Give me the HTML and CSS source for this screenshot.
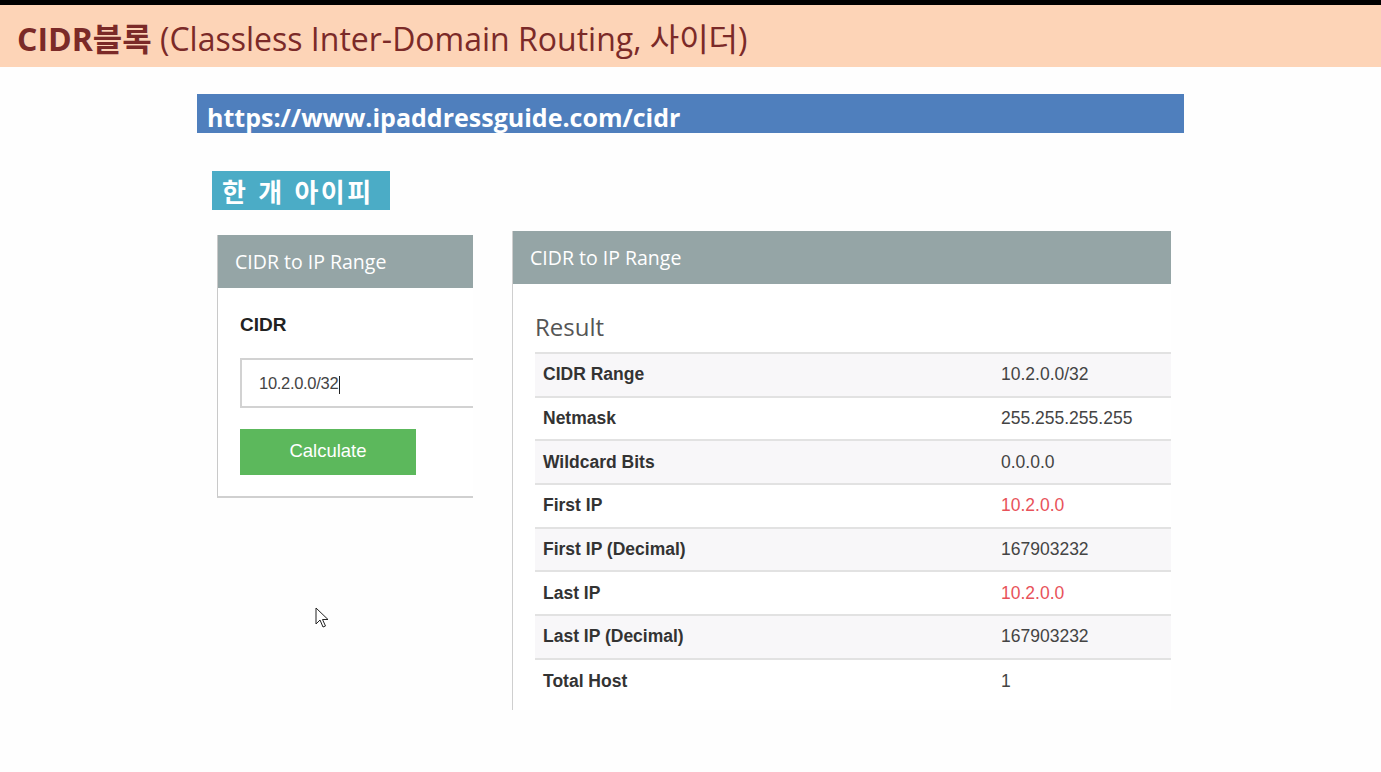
FILE: index.html
```html
<!DOCTYPE html>
<html lang="ko">
<head>
<meta charset="utf-8">
<link rel="stylesheet" href="styles.css">
</head>
<body>
<div class="topline"></div>
<header class="title-bar">
  <h1><b>CIDR블록</b> (Classless Inter-Domain Routing, 사이더)</h1>
</header>
<main class="content">
  <div class="url-bar">https://www.ipaddressguide.com/cidr</div>
  <div class="tag">한 개 아이피</div>
  <div class="panels">
    <section class="panel form-panel">
      <div class="panel-head">CIDR to IP Range</div>
      <div class="panel-body">
        <div class="field-label">CIDR</div>
        <div class="input">10.2.0.0/32<span class="caret"></span></div>
        <div class="btn">Calculate</div>
      </div>
    </section>
    <section class="panel result-panel">
      <div class="panel-head">CIDR to IP Range</div>
      <div class="result-body">
        <h2>Result</h2>
        <table class="result">
          <tr class="odd"><th>CIDR Range</th><td>10.2.0.0/32</td></tr>
          <tr><th>Netmask</th><td>255.255.255.255</td></tr>
          <tr class="odd"><th>Wildcard Bits</th><td>0.0.0.0</td></tr>
          <tr><th>First IP</th><td class="red">10.2.0.0</td></tr>
          <tr class="odd"><th>First IP (Decimal)</th><td>167903232</td></tr>
          <tr><th>Last IP</th><td class="red">10.2.0.0</td></tr>
          <tr class="odd"><th>Last IP (Decimal)</th><td>167903232</td></tr>
          <tr><th>Total Host</th><td>1</td></tr>
        </table>
      </div>
    </section>
  </div>
</main>
<svg class="cursor" width="14" height="22" viewBox="0 0 14 22">
  <path d="M1 1 L1 17 L5 13 L8 20 L10.5 19 L7.5 12.5 L13 12.5 Z" fill="#fff" stroke="#222" stroke-width="1"/>
</svg>
</body>
</html>
```
FILE: styles.css
```css
* { box-sizing: border-box; }
html, body { margin: 0; padding: 0; }
body {
  width: 1381px;
  height: 772px;
  overflow: hidden;
  background: #fefefe;
  font-family: "Liberation Sans", Arial, sans-serif;
  position: relative;
}
.topline { height: 5px; background: #000; }
.title-bar {
  height: 62px;
  background: #fdd4b7;
  padding-left: 17px;
  padding-top: 5px;
  display: flex;
  align-items: center;
}
.title-bar h1 {
  margin: 0;
  font-family: "Open Sans", "Noto Sans CJK KR", sans-serif;
  font-weight: 400;
  font-size: 32px;
  letter-spacing: 0;
  color: #7b2a28;
  line-height: 1;
  white-space: nowrap;
}
.title-bar h1 b { font-weight: 700; }
.content {
  padding-left: 197px;
  padding-top: 27px;
}
.url-bar {
  width: 987px;
  height: 39px;
  background: #4f7fbd;
  color: #fff;
  font-family: "Open Sans", "Noto Sans CJK KR", sans-serif;
  font-weight: 700;
  font-size: 25px;
  line-height: 39px;
  padding-left: 10px;
  padding-top: 4px;
}
.tag {
  margin-top: 38px;
  margin-left: 15px;
  width: 178px;
  height: 39px;
  background: #4bacc6;
  color: #fff;
  font-family: "Noto Sans CJK KR", sans-serif;
  font-weight: 700;
  font-size: 26px;
  line-height: 39px;
  padding-left: 10px;
  letter-spacing: 2.5px;
  white-space: nowrap;
}
.panels {
  display: flex;
  align-items: flex-start;
  margin-top: 21px;
  margin-left: 20px;
  gap: 39px;
}
.panel { background: #fff; }
.panel-head {
  background: #95a5a6;
  color: #fff;
  font-family: "Open Sans", sans-serif;
  font-size: 19.5px;
  height: 53px;
  line-height: 53px;
  padding-left: 17px;
  white-space: nowrap;
}
.form-panel {
  width: 256px;
  margin-top: 4px;
  border-left: 1px solid #c9c9c9;
  border-bottom: 2px solid #d0d0d0;
}
.panel-body { padding: 26px 0 21px 22px; }
.field-label {
  font-weight: 700;
  font-size: 19px;
  color: #222;
  height: 21px;
  line-height: 21px;
}
.input {
  margin-top: 23px;
  height: 50px;
  border: 2px solid #d2d2d2;
  border-right: none;
  padding-left: 17px;
  font-size: 16.5px;
  line-height: 46px;
  color: #444;
  letter-spacing: -0.3px;
}
.caret {
  display: inline-block;
  width: 1px;
  height: 18px;
  background: #222;
  vertical-align: middle;
  margin-left: 1px;
}
.btn {
  margin-top: 21px;
  width: 176px;
  height: 46px;
  background: #5cb85c;
  color: #fff;
  font-size: 18.5px;
  line-height: 44px;
  text-align: center;
}
.result-panel {
  width: 659px;
  border-left: 1px solid #cfcfcf;
  height: 479px;
}
.result-body { padding-left: 22px; }
.result-body h2 {
  margin: 0;
  font-family: "Open Sans", sans-serif;
  font-weight: 400;
  font-size: 24px;
  color: #555;
  height: 68px;
  line-height: 22px;
  padding-top: 32px;
}
.result {
  width: 100%;
  border-collapse: collapse;
  font-size: 17.5px;
}
.result tr { height: 43.7px; border-top: 2px solid #e2e2e2; }
.result tr.odd { background: #f8f7f9; }
.result th {
  text-align: left;
  font-weight: 700;
  color: #333;
  padding-left: 8px;
  width: 465px;
}
.result td { color: #444; }
.result td.red { color: #e8525a; }
.cursor {
  position: absolute;
  left: 315px;
  top: 607px;
}
```
